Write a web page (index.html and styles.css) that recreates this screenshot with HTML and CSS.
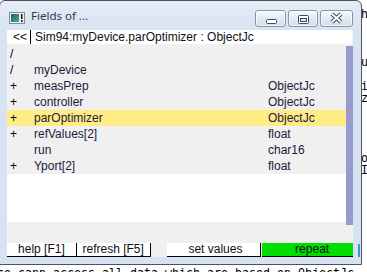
FILE: index.html
```html
<!DOCTYPE html>
<html>
<head>
<meta charset="utf-8">
<link rel="stylesheet" href="styles.css">
</head>
<body>
<div class="bg">
  <div class="ln"></div>
  <div class="ln"><span class="far">hat</span></div>
  <div class="ln"></div>
  <div class="ln"></div>
  <div class="ln"></div>
  <div class="ln"><span class="far">use</span></div>
  <div class="ln"></div>
  <div class="ln"><span class="far">in</span></div>
  <div class="ln"><span class="far">zed</span></div>
  <div class="ln"></div>
  <div class="ln"></div>
  <div class="ln"></div>
  <div class="ln"></div>
  <div class="ln"><span class="far">of</span></div>
  <div class="ln"><span class="far">In</span></div>
  <div class="ln"></div>
  <div class="ln"></div>
  <div class="ln"></div>
  <div class="ln"></div>
  <div class="ln"></div>
  <div class="ln"></div>
  <div class="ln"></div>
  <div class="ln last">Once cann access all data which are based on ObjectJc</div>
</div>

<div class="win">
  <div class="titlebar">
    <svg class="appicon" width="16" height="12" viewBox="0 0 16 12">
      <defs>
        <linearGradient id="ig" x1="0" y1="0" x2="1" y2="1">
          <stop offset="0" stop-color="#1f5f66"/>
          <stop offset="1" stop-color="#5aa58a"/>
        </linearGradient>
      </defs>
      <rect x="0.5" y="0.5" width="15" height="11" fill="#eef2f6" stroke="#7d8c9c"/>
      <rect x="2" y="2" width="8" height="8" fill="url(#ig)"/>
      <rect x="12" y="2" width="1.5" height="5" fill="#111"/>
      <rect x="12" y="8" width="1.5" height="2" fill="#111"/>
    </svg>
    <span class="title">Fields of ...</span>
    <div class="caps">
      <div class="cap cap-min">
        <svg width="29" height="15" viewBox="0 0 29 15"><rect x="10.5" y="8.5" width="10" height="4" rx="1" fill="#fff" stroke="#3b4a5e"/></svg>
      </div>
      <div class="cap cap-max">
        <svg width="28" height="15" viewBox="0 0 28 15"><rect x="9.5" y="4.5" width="10" height="8" rx="1" fill="#fff" stroke="#3b4a5e"/><rect x="11.5" y="7.5" width="6" height="3" fill="#dfe7f1" stroke="#3b4a5e"/></svg>
      </div>
      <div class="cap cap-close">
        <svg width="31" height="15" viewBox="0 0 31 15">
          <path d="M11 3 L20 11 M20 3 L11 11" stroke="#3b4a5e" stroke-width="4" fill="none"/>
          <path d="M11 3 L20 11 M20 3 L11 11" stroke="#fff" stroke-width="2" fill="none"/>
        </svg>
      </div>
    </div>
  </div>

  <div class="client">
    <div class="addr">
      <span class="back">&lt;&lt;</span>
      <span class="path">Sim94:myDevice.parOptimizer : ObjectJc</span>
    </div>

    <div class="listwrap">
      <div class="list">
        <div class="row"><span class="sign">/</span><span class="name"></span><span class="type"></span></div>
        <div class="row"><span class="sign">/</span><span class="name">myDevice</span><span class="type"></span></div>
        <div class="row"><span class="sign">+</span><span class="name">measPrep</span><span class="type">ObjectJc</span></div>
        <div class="row"><span class="sign">+</span><span class="name">controller</span><span class="type">ObjectJc</span></div>
        <div class="row sel"><span class="sign">+</span><span class="name">parOptimizer</span><span class="type">ObjectJc</span></div>
        <div class="row"><span class="sign">+</span><span class="name">refValues[2]</span><span class="type">float</span></div>
        <div class="row"><span class="sign"></span><span class="name">run</span><span class="type">char16</span></div>
        <div class="row"><span class="sign">+</span><span class="name">Yport[2]</span><span class="type">float</span></div>
        <div class="empty"></div>
      </div>
      <div class="scroll"></div>
    </div>

    <div class="btns">
      <div class="btn b-help">help [F1]</div>
      <div class="btn b-refresh">refresh [F5]</div>
      <div class="btn b-set">set values</div>
      <div class="btn b-repeat">repeat</div>
    </div>
  </div>
</div>
</body>
</html>
```

FILE: styles.css
```css
* { box-sizing: border-box; }

html, body {
  margin: 0;
  padding: 0;
}

body {
  width: 367px;
  height: 272px;
  overflow: hidden;
  background: #fff;
  position: relative;
  font-family: "Liberation Sans", Arial, sans-serif;
}

/* background editor text, partly covered by the window */
.bg {
  margin: -4px 0 0 -17px;
  font-family: "DejaVu Sans Mono", monospace;
  font-size: 11.63px;
  line-height: 12px;
  color: #000;
}

.ln {
  height: 12px;
  white-space: pre;
}

.ln.last { margin-top: 7px; }

.far { padding-left: 54ch; }

/* window */
.win {
  position: absolute;
  left: -1px;
  top: 0;
  width: 363px;
  height: 265px;
  border: 1px solid #4e535a;
  border-radius: 6px 6px 0 0;
  background: linear-gradient(#e4ecf6, #d8e3f1 30px, #d6e3f2);
  padding: 0 8px 7px 7px;
  display: flex;
  flex-direction: column;
}

.titlebar {
  height: 29px;
  display: flex;
  align-items: flex-start;
}

.appicon {
  margin: 11px 0 0 2px;
  flex: none;
}

.title {
  margin: 7px 0 0 6px;
  font-family: "Noto Sans", sans-serif;
  font-size: 11.5px;
  line-height: 16px;
  color: #2f3843;
}

.caps {
  margin: 9px 0 0 auto;
  display: flex;
  gap: 2px;
}

.cap {
  height: 17px;
  border: 1px solid #8896aa;
  border-radius: 3px;
  background: linear-gradient(#f6f9fc, #e3eaf3 50%, #d3deec);
  box-shadow: inset 0 0 0 1px rgba(255,255,255,0.6);
}

.cap svg { display: block; }

.cap-min { width: 31px; }
.cap-max { width: 30px; }
.cap-close { width: 33px; }

.client {
  flex: 1;
  background: #f0f0f0;
  display: flex;
  flex-direction: column;
  font-size: 12px;
  color: #1b1b3c;
}

.addr {
  height: 14px;
  display: flex;
  background: #fff;
  line-height: 14px;
  margin-right: 1px;
  color: #111;
}

.back {
  width: 24px;
  padding-left: 6px;
  border-right: 1px solid #000;
}

.path {
  padding-left: 4px;
}

.listwrap {
  margin-top: 2px;
  height: 179px;
  display: flex;
}

.list {
  flex: 1;
  display: flex;
  flex-direction: column;
}

.row {
  height: 16px;
  line-height: 16px;
  display: grid;
  grid-template-columns: 24px 234px 1fr;
  padding-left: 3px;
  background: #f0f0f0;
}

.row.sel { background: #ffec85; }

.sign { color: #000; }

.empty {
  height: 48px;
  background: #fff;
}

.scroll {
  width: 7px;
  background: #9999cc;
}

.btns {
  margin-top: auto;
  height: 14px;
  display: flex;
  position: relative;
}

.btns::after {
  content: "";
  position: absolute;
  right: -7px;
  top: 1px;
  width: 2px;
  height: 13px;
  background: #3d93dc;
}

.btn {
  height: 14px;
  line-height: 13px;
  text-align: center;
  background: #fff;
  border-bottom: 1px solid #000;
  border-right: 1px solid #000;
  color: #111;
  white-space: nowrap;
}

.b-help { width: 70px; }
.b-refresh { width: 74px; }
.b-set { width: 95px; margin-left: 16px; padding-left: 4px; }
.b-repeat {
  width: 91px;
  margin-left: 1px;
  padding-left: 9px;
  background: #00dd00;
  border-right: none;
}
```
